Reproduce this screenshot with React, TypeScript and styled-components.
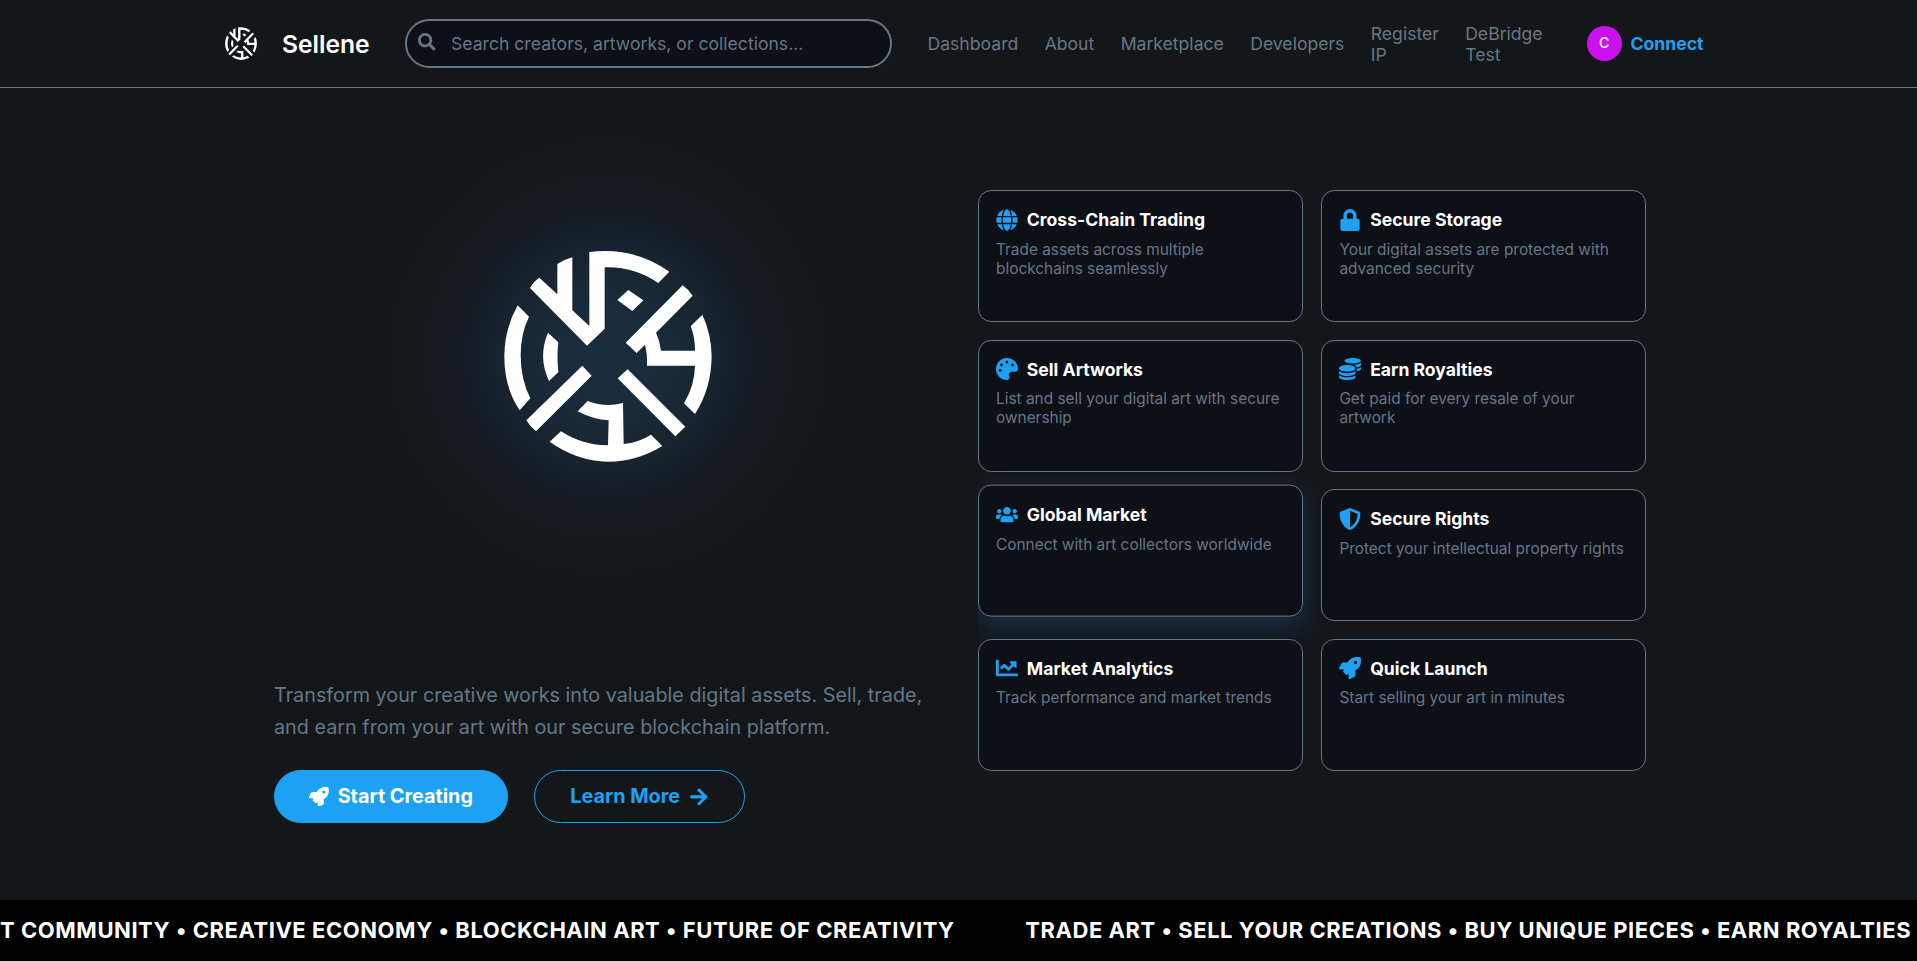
import React from "react";
import styled, { createGlobalStyle } from "styled-components";
import {
  FaArrowRight,
  FaChartLine,
  FaCoins,
  FaGlobe,
  FaLock,
  FaPalette,
  FaRocket,
  FaSearch,
  FaShieldAlt,
  FaUsers,
} from "react-icons/fa";

const color = {
  page: "#14171a",
  panel: "#0d1017",
  line: "#657786",
  muted: "#657786",
  accent: "#1da1f2",
  text: "#ffffff",
};

const GlobalStyle = createGlobalStyle`
  * { box-sizing: border-box; }
  body {
    margin: 0;
    background: ${color.page};
    color: ${color.text};
    font-family: Inter, "Liberation Sans", sans-serif;
    font-size: 17.6px;
    overflow: hidden;
  }
`;

const Page = styled.div`
  display: flex;
  flex-direction: column;
  height: 961px;
  overflow: hidden;
`;

const Header = styled.header`
  display: flex;
  align-items: center;
  flex: none;
  height: 88px;
  padding: 0 213px 0 225px;
  border-bottom: 1px solid ${color.line};
`;

const Brand = styled.a`
  display: flex;
  align-items: center;
  flex: none;
  gap: 25px;
  width: 180px;
  font-size: 24.64px;
  font-weight: 600;
`;

const SearchBox = styled.label`
  display: flex;
  align-items: flex-start;
  flex: none;
  width: 487px;
  height: 49px;
  padding: 12px 11px;
  border: 2px solid ${color.line};
  border-radius: 25px;
  background: ${color.panel};
  color: ${color.muted};
  svg { font-size: 17.6px; }
`;

const SearchInput = styled.input`
  flex: 1;
  height: 21px;
  margin-left: 15.4px;
  padding: 0;
  border: 0;
  outline: 0;
  background: transparent;
  color: ${color.text};
  font: inherit;
  &::placeholder { color: ${color.muted}; opacity: 1; }
`;

const Nav = styled.nav`
  display: flex;
  align-items: center;
  flex: none;
  gap: 26.4px;
  margin-left: 35.5px;
  line-height: 21px;
`;

const NavLink = styled.a<{ $width?: number }>`
  width: ${(p) => (p.$width ? `${p.$width}px` : "auto")};
  color: ${color.muted};
`;

const Account = styled.div`
  display: flex;
  align-items: center;
  flex: none;
  gap: 8.8px;
  margin-left: 43.5px;
  color: ${color.accent};
  font-weight: 700;
`;

const Avatar = styled.span`
  display: flex;
  align-items: center;
  justify-content: center;
  width: 35px;
  height: 35px;
  padding-bottom: 2px;
  border-radius: 50%;
  background: #cc11f0;
  color: ${color.text};
  font-size: 14px;
  font-weight: 500;
`;

const Hero = styled.main`
  flex: 1;
  display: flex;
  align-items: flex-start;
  padding-left: 274px;
`;

const Intro = styled.section`
  width: 704px;
`;

const Emblem = styled.div`
  display: flex;
  align-items: center;
  justify-content: center;
  width: 460px;
  height: 460px;
  margin: 38px 0 0 104px;
  background: radial-gradient(
    circle closest-side,
    rgba(50, 133, 200, 0.2) 0%,
    rgba(50, 133, 200, 0.19) 22%,
    rgba(48, 125, 190, 0.15) 40%,
    rgba(46, 115, 180, 0.09) 55%,
    rgba(46, 80, 130, 0.05) 68%,
    rgba(60, 60, 70, 0.03) 82%,
    rgba(60, 60, 70, 0) 98%
  );
`;

const Lead = styled.p`
  width: 670px;
  margin: 94px 0 0;
  color: ${color.muted};
  font-size: 19.8px;
  line-height: 31.7px;
`;

const Actions = styled.div`
  display: flex;
  gap: 26px;
  margin-top: 27px;
`;

const Button = styled.a<{ $filled?: boolean; $width: number }>`
  display: flex;
  align-items: center;
  justify-content: center;
  gap: 8.8px;
  width: ${(p) => p.$width}px;
  height: 53px;
  padding-bottom: 1px;
  border: 1px solid ${color.accent};
  border-radius: 27px;
  background: ${(p) => (p.$filled ? color.accent : "transparent")};
  color: ${(p) => (p.$filled ? color.text : color.accent)};
  font-size: 19.8px;
  font-weight: 700;
`;

const CardGrid = styled.section`
  display: grid;
  grid-template-columns: repeat(2, 324.8px);
  grid-auto-rows: 132px;
  gap: 17.6px 18.6px;
  margin-top: 102px;
  overflow: hidden;
`;

const Card = styled.article<{ $raised?: boolean }>`
  padding: 17.6px 17px;
  border: 1px solid ${color.line};
  border-radius: 13.2px;
  background: ${color.panel};
  transform: translateY(${(p) => (p.$raised ? "-4.4px" : "0")});
  box-shadow: ${(p) => (p.$raised ? "0 8.8px 26.4px rgba(50, 145, 215, 0.22)" : "none")};
`;

const CardHead = styled.h3`
  display: flex;
  align-items: center;
  gap: 8.8px;
  height: 22px;
  margin: 0;
  font-size: 17.6px;
  font-weight: 700;
  svg { width: 22px; height: 22px; color: ${color.accent}; }
`;

const CardText = styled.p`
  margin: 9px 0 0;
  color: ${color.muted};
  font-size: 15.4px;
  line-height: 19px;
`;

const Ticker = styled.footer`
  display: flex;
  align-items: center;
  flex: none;
  gap: 70.5px;
  height: 61px;
  padding-bottom: 2px;
  overflow: hidden;
  background: #000;
  font-size: 22px;
  font-weight: 700;
  white-space: nowrap;
`;

const TickerText = styled.span`
  letter-spacing: 0.55px;
`;

function Mark({ width, height }: { width: number; height: number }) {
  return (
    <svg width={width} height={height} viewBox="72 89 624 636" fill="#fff" preserveAspectRatio="none">
      <path d="M150 203Q162 182 178 172L232 222V131Q254 117 277 111V270L328 317V95Q460 78 568 154L535 188Q462 138 374 141V325L321 376Z" />
      <path d="M412 239L445 209L490 240L457 272Z" />
      <path d="M608 195Q626 208 638 226L528 337Q540 362 543 391H645Q645 350 632 318L667 283Q694 340 695 408Q694 505 645 581L612 549Q644 495 645 436H501Q502 400 495 373L470 398L437 367Z" />
      <path d="M113 255L147 289Q122 340 122 405Q122 478 151 534L119 570Q72 500 73 405Q74 325 113 255Z" />
      <path d="M204 337L235 366Q230 405 235 456L207 482Q173 410 204 337Z" />
      <path d="M307 436L335 466L168 633Q151 620 139 600Z" />
      <path d="M443 447L616 619L586 648L413 474Z" />
      <path d="M323 542Q375 562 429 548L431 671Q475 667 513 643L547 677Q470 724 384 724Q290 722 209 664L243 633Q308 675 384 675L386 600Q340 598 293 573Z" />
    </svg>
  );
}

const links: { label: string; width?: number }[] = [
  { label: "Dashboard" },
  { label: "About" },
  { label: "Marketplace" },
  { label: "Developers" },
  { label: "Register IP", width: 68 },
  { label: "DeBridge Test", width: 78 },
];

const cards = [
  { icon: FaGlobe, title: "Cross-Chain Trading", text: "Trade assets across multiple blockchains seamlessly" },
  { icon: FaLock, title: "Secure Storage", text: "Your digital assets are protected with advanced security" },
  { icon: FaPalette, title: "Sell Artworks", text: "List and sell your digital art with secure ownership" },
  { icon: FaCoins, title: "Earn Royalties", text: "Get paid for every resale of your artwork" },
  { icon: FaUsers, title: "Global Market", text: "Connect with art collectors worldwide", raised: true },
  { icon: FaShieldAlt, title: "Secure Rights", text: "Protect your intellectual property rights" },
  { icon: FaChartLine, title: "Market Analytics", text: "Track performance and market trends" },
  { icon: FaRocket, title: "Quick Launch", text: "Start selling your art in minutes" },
];

export default function App() {
  return (
    <>
      <GlobalStyle />
      <Page>
        <Header>
          <Brand>
            <Mark width={32} height={33} />
            Sellene
          </Brand>
          <SearchBox>
            <FaSearch />
            <SearchInput placeholder="Search creators, artworks, or collections..." />
          </SearchBox>
          <Nav>
            {links.map((l) => (
              <NavLink key={l.label} $width={l.width}>{l.label}</NavLink>
            ))}
          </Nav>
          <Account>
            <Avatar>C</Avatar>
            Connect
          </Account>
        </Header>
        <Hero>
          <Intro>
            <Emblem>
              <Mark width={208} height={212} />
            </Emblem>
            <Lead>
              Transform your creative works into valuable digital assets. Sell, trade, and earn from
              your art with our secure blockchain platform.
            </Lead>
            <Actions>
              <Button $filled $width={234}>
                <FaRocket />
                Start Creating
              </Button>
              <Button $width={211}>
                Learn More
                <FaArrowRight />
              </Button>
            </Actions>
          </Intro>
          <CardGrid>
            {cards.map(({ icon: Icon, title, text, raised }) => (
              <Card key={title} $raised={raised}>
                <CardHead>
                  <Icon />
                  {title}
                </CardHead>
                <CardText>{text}</CardText>
              </Card>
            ))}
          </CardGrid>
        </Hero>
        <Ticker>
          <TickerText>T COMMUNITY • CREATIVE ECONOMY • BLOCKCHAIN ART • FUTURE OF CREATIVITY</TickerText>
          <TickerText>TRADE ART • SELL YOUR CREATIONS • BUY UNIQUE PIECES • EARN ROYALTIES</TickerText>
        </Ticker>
      </Page>
    </>
  );
}
